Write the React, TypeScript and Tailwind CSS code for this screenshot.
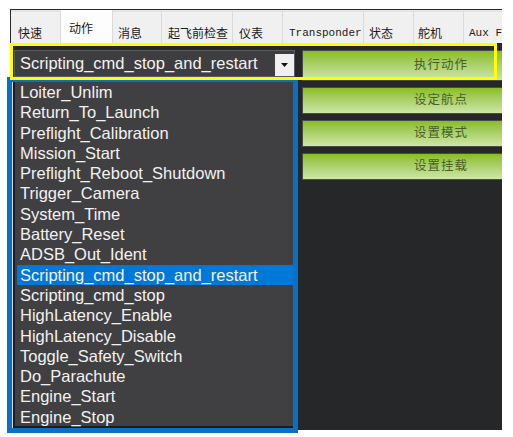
const tabs = [
  { label: '快速', w: 'w-[50px]', pl: 'pl-[7px]' },
  { label: '动作', w: 'w-[52px]', pl: 'pl-[8px]', active: true },
  { label: '消息', w: 'w-[49px]', pl: 'pl-[5px]' },
  { label: '起飞前检查', w: 'w-[71px]', pl: 'pl-[6px]' },
  { label: '仪表', w: 'w-[50px]', pl: 'pl-[6px]' },
  { label: 'Transponder', w: 'w-[81px]', pl: 'pl-[6px]', mono: true },
  { label: '状态', w: 'w-[50px]', pl: 'pl-[5px]' },
  { label: '舵机', w: 'w-[50px]', pl: 'pl-[4px]' },
  { label: 'Aux F', w: 'w-[40px]', pl: 'pl-[5px]', mono: true },
]

const items = [
  'Loiter_Unlim',
  'Return_To_Launch',
  'Preflight_Calibration',
  'Mission_Start',
  'Preflight_Reboot_Shutdown',
  'Trigger_Camera',
  'System_Time',
  'Battery_Reset',
  'ADSB_Out_Ident',
  'Scripting_cmd_stop_and_restart',
  'Scripting_cmd_stop',
  'HighLatency_Enable',
  'HighLatency_Disable',
  'Toggle_Safety_Switch',
  'Do_Parachute',
  'Engine_Start',
  'Engine_Stop',
]

const selected = 'Scripting_cmd_stop_and_restart'

const buttons = [
  { label: '执行动作', h: 'h-[31px]' },
  { label: '设定航点', h: 'h-[27px]' },
  { label: '设置模式', h: 'h-[27px]' },
  { label: '设置挂载', h: 'h-[27px]' },
]

const cjk = "font-['Noto_Sans_CJK_SC',sans-serif]"
const sans = "font-['Liberation_Sans','Noto_Sans_CJK_SC',sans-serif]"

export default function App() {
  return (
    <div className="relative w-[513px] h-[437px] bg-white overflow-hidden pt-[9px] pl-[10px]">
      <div className="w-[492px] h-[421px] flex flex-col border-t border-[#2b2b2b]">
        {/* tab strip */}
        <div className="h-[33px] flex bg-[#f0f0f0] border-l border-[#2b2b2b] overflow-hidden shrink-0">
          {tabs.map((t) => (
            <div
              key={t.label}
              className={`${t.w} ${t.pl} shrink-0 h-full flex border-r border-[#dadada] ${
                t.active ? 'bg-[#fdfdfd] items-start pt-[11px]' : 'items-start pt-[14px] border-t-2 border-t-[#e4e4e4]'
              }`}
            >
              <span
                className={`leading-[14px] text-[#1a1a1a] whitespace-nowrap ${
                  t.mono ? "font-['Liberation_Mono',monospace] text-[11px]" : `${cjk} text-[12px]`
                }`}
              >
                {t.label}
              </span>
            </div>
          ))}
        </div>

        {/* panel */}
        <div className="flex-1 bg-[#262729] flex gap-[7px] pt-[7px] pl-[4px] overflow-hidden">
          <div className="w-[281px] h-[27px] shrink-0 flex items-stretch border border-[#5b5b5b] bg-[#3e3e40]">
            <div className={`flex-1 pl-[5px] text-[16.5px] leading-[25px] text-[#f2f2f2] ${sans}`}>{selected}</div>
            <div className="w-[19px] mt-[3px] bg-[#f0f0f0] flex items-center justify-center">
              <svg width="7" height="4" viewBox="0 0 7 4">
                <path d="M0 0h7L3.5 4z" fill="#111" />
              </svg>
            </div>
          </div>

          <div className="w-[278px] shrink-0 flex flex-col gap-[6px]">
            {buttons.map((b) => (
              <div
                key={b.label}
                className={`${b.h} border border-[#4a4a4a] bg-gradient-to-b from-[#8abd17] to-[#cfe6a6] flex items-center justify-center pb-[3px]`}
              >
                <span className={`${cjk} text-[12.5px] tracking-[1px] text-[#4a5e2a]`}>{b.label}</span>
              </div>
            ))}
          </div>
        </div>
      </div>

      {/* dropdown list */}
      <div className="absolute left-[7px] top-[77px] w-[291px] h-[356px] border-[5px] border-[#0a70c6] bg-[#404042] z-10">
        <div className="h-full border-l border-[#d8d8d8]">
          <div className="h-full border-l-2 border-b-2 border-[#1c1c1c]">
            {items.map((it) => (
              <div
                key={it}
                className={`h-[20.3px] ml-[2px] pl-[3px] text-[16.5px] leading-[20.3px] whitespace-nowrap text-[#f2f2f2] ${sans} ${
                  it === selected ? 'bg-[#0078d7]' : ''
                }`}
              >
                {it}
              </div>
            ))}
          </div>
        </div>
      </div>

      {/* highlight frame */}
      <div className="absolute left-[10px] top-[43px] w-[487px] h-[37px] border-[3px] border-[#ffff00] pointer-events-none z-20" />
    </div>
  )
}
